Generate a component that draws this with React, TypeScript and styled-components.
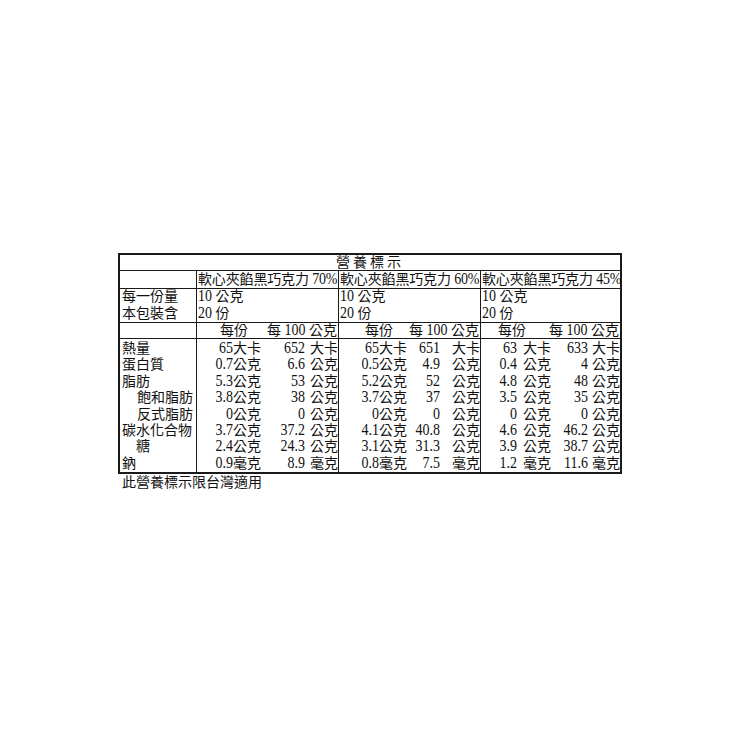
import React from "react";
import styled, { createGlobalStyle } from "styled-components";

const GlobalStyle = createGlobalStyle`
  html, body { margin: 0; padding: 0; background: #fff; }
  body {
    font-family: "Liberation Serif", "Noto Sans CJK TC", serif;
    color: #111;
  }
`;

const LINE = "#1a1a1a";

const Page = styled.div`
  display: flex;
  flex-direction: column;
  align-items: center;
  padding-top: 253px;
`;

const Wrapper = styled.div`
  width: 504px;
`;

const Table = styled.div`
  display: grid;
  box-sizing: border-box;
  width: 504px;
  grid-template-columns: 77px 142px 142px 139px;
  grid-template-rows: 16px 18px 34px 16px 133px;
  border: 2px solid ${LINE};
  font-size: 14px;
`;

const Cell = styled.div<{ $last?: boolean; $end?: boolean }>`
  box-sizing: border-box;
  border-right: ${(p) => (p.$last ? "none" : `1px solid ${LINE}`)};
  border-bottom: ${(p) => (p.$end ? "none" : `1px solid ${LINE}`)};
  white-space: nowrap;
  min-width: 0;
`;

const Title = styled(Cell)`
  grid-column: 1 / -1;
  text-align: center;
  letter-spacing: 3px;
  line-height: 15px;
`;

const Name = styled(Cell)`
  line-height: 17px;
  padding-left: 1px;
  letter-spacing: -0.15px;
`;

const Serving = styled(Cell)<{ $pad?: number }>`
  line-height: 16.5px;
  padding-left: ${(p) => p.$pad ?? 1}px;
  display: flex;
  flex-direction: column;
`;

const Head = styled(Cell)<{ $offset: number }>`
  display: flex;
  justify-content: space-between;
  line-height: 15px;
  padding-left: ${(p) => p.$offset}px;
  padding-right: 1px;
`;

const LabelColumn = styled(Cell)`
  display: grid;
  grid-template-rows: repeat(8, 16.4px);
  padding-left: 2px;
  padding-top: 2px;
`;

const Label = styled.div<{ $indent: number }>`
  line-height: 16.4px;
  padding-left: ${(p) => p.$indent}px;
`;

const ValueColumn = styled(Cell)<{ $cols: string }>`
  display: grid;
  grid-template-columns: ${(p) => p.$cols};
  grid-template-rows: repeat(8, 16.4px);
  padding-top: 2px;
`;

const Num = styled.span`
  text-align: right;
  line-height: 16.4px;
`;

const Unit = styled.span<{ $align: "left" | "right"; $pad?: number }>`
  text-align: ${(p) => p.$align};
  padding-left: ${(p) => p.$pad ?? 0}px;
  line-height: 16.4px;
`;

/* Tall, narrow digits like the Ming-style font in the label */
const Digits = styled.span`
  display: inline-block;
  transform: scaleY(1.14);
  transform-origin: 50% 78%;
`;

const Footer = styled.div`
  font-size: 14px;
  line-height: 16px;
  padding-left: 4px;
  margin-top: 1px;
`;

function tall(text: string) {
  const parts = text.split(/([0-9.%]+)/);
  return parts.map((part, i) =>
    /[0-9%]/.test(part) ? <Digits key={i}>{part}</Digits> : <React.Fragment key={i}>{part}</React.Fragment>
  );
}

type Val = [string, string, string, string];

const rows: { label: string; indent: number; vals: [Val, Val, Val] }[] = [
  { label: "熱量", indent: 0, vals: [["65", "大卡", "652", "大卡"], ["65", "大卡", "651", "大卡"], ["63", "大卡", "633", "大卡"]] },
  { label: "蛋白質", indent: 0, vals: [["0.7", "公克", "6.6", "公克"], ["0.5", "公克", "4.9", "公克"], ["0.4", "公克", "4", "公克"]] },
  { label: "脂肪", indent: 0, vals: [["5.3", "公克", "53", "公克"], ["5.2", "公克", "52", "公克"], ["4.8", "公克", "48", "公克"]] },
  { label: "飽和脂肪", indent: 15, vals: [["3.8", "公克", "38", "公克"], ["3.7", "公克", "37", "公克"], ["3.5", "公克", "35", "公克"]] },
  { label: "反式脂肪", indent: 15, vals: [["0", "公克", "0", "公克"], ["0", "公克", "0", "公克"], ["0", "公克", "0", "公克"]] },
  { label: "碳水化合物", indent: 0, vals: [["3.7", "公克", "37.2", "公克"], ["4.1", "公克", "40.8", "公克"], ["4.6", "公克", "46.2", "公克"]] },
  { label: "糖", indent: 14, vals: [["2.4", "公克", "24.3", "公克"], ["3.1", "公克", "31.3", "公克"], ["3.9", "公克", "38.7", "公克"]] },
  { label: "鈉", indent: 0, vals: [["0.9", "毫克", "8.9", "毫克"], ["0.8", "毫克", "7.5", "毫克"], ["1.2", "毫克", "11.6", "毫克"]] },
];

const products = [
  { name: "軟心夾餡黑巧克力 70%", cols: "36px 28px 44px 1fr", unitPad: 0, headOffset: 23, last: false },
  { name: "軟心夾餡黑巧克力 60%", cols: "40px 28px 33px 1fr", unitPad: 0, headOffset: 26, last: false },
  { name: "軟心夾餡黑巧克力 45%", cols: "36px 34px 37px 1fr", unitPad: 6, headOffset: 17, last: true },
];

export default function App() {
  return (
    <>
      <GlobalStyle />
      <Page>
        <Wrapper>
          <Table>
            <Title $last>營養標示</Title>

            <Name />
            {products.map((p) => (
              <Name key={p.name} $last={p.last}>
                {tall(p.name)}
              </Name>
            ))}

            <Serving $pad={2}>
              <span>每一份量</span>
              <span>本包裝含</span>
            </Serving>
            {products.map((p) => (
              <Serving key={p.name} $last={p.last}>
                <span>{tall("10 公克")}</span>
                <span>{tall("20 份")}</span>
              </Serving>
            ))}

            <Head $offset={0} />
            {products.map((p) => (
              <Head key={p.name} $offset={p.headOffset} $last={p.last}>
                <span>每份</span>
                <span>{tall("每 100 公克")}</span>
              </Head>
            ))}

            <LabelColumn $end>
              {rows.map((r) => (
                <Label key={r.label} $indent={r.indent}>
                  {r.label}
                </Label>
              ))}
            </LabelColumn>
            {products.map((p, i) => (
              <ValueColumn key={p.name} $cols={p.cols} $last={p.last} $end>
                {rows.map((r) => {
                  const v = r.vals[i];
                  return (
                    <React.Fragment key={r.label}>
                      <Num>{tall(v[0])}</Num>
                      <Unit $align="left" $pad={p.unitPad}>
                        {v[1]}
                      </Unit>
                      <Num>{tall(v[2])}</Num>
                      <Unit $align="right">{v[3]}</Unit>
                    </React.Fragment>
                  );
                })}
              </ValueColumn>
            ))}
          </Table>
          <Footer>此營養標示限台灣適用</Footer>
        </Wrapper>
      </Page>
    </>
  );
}
